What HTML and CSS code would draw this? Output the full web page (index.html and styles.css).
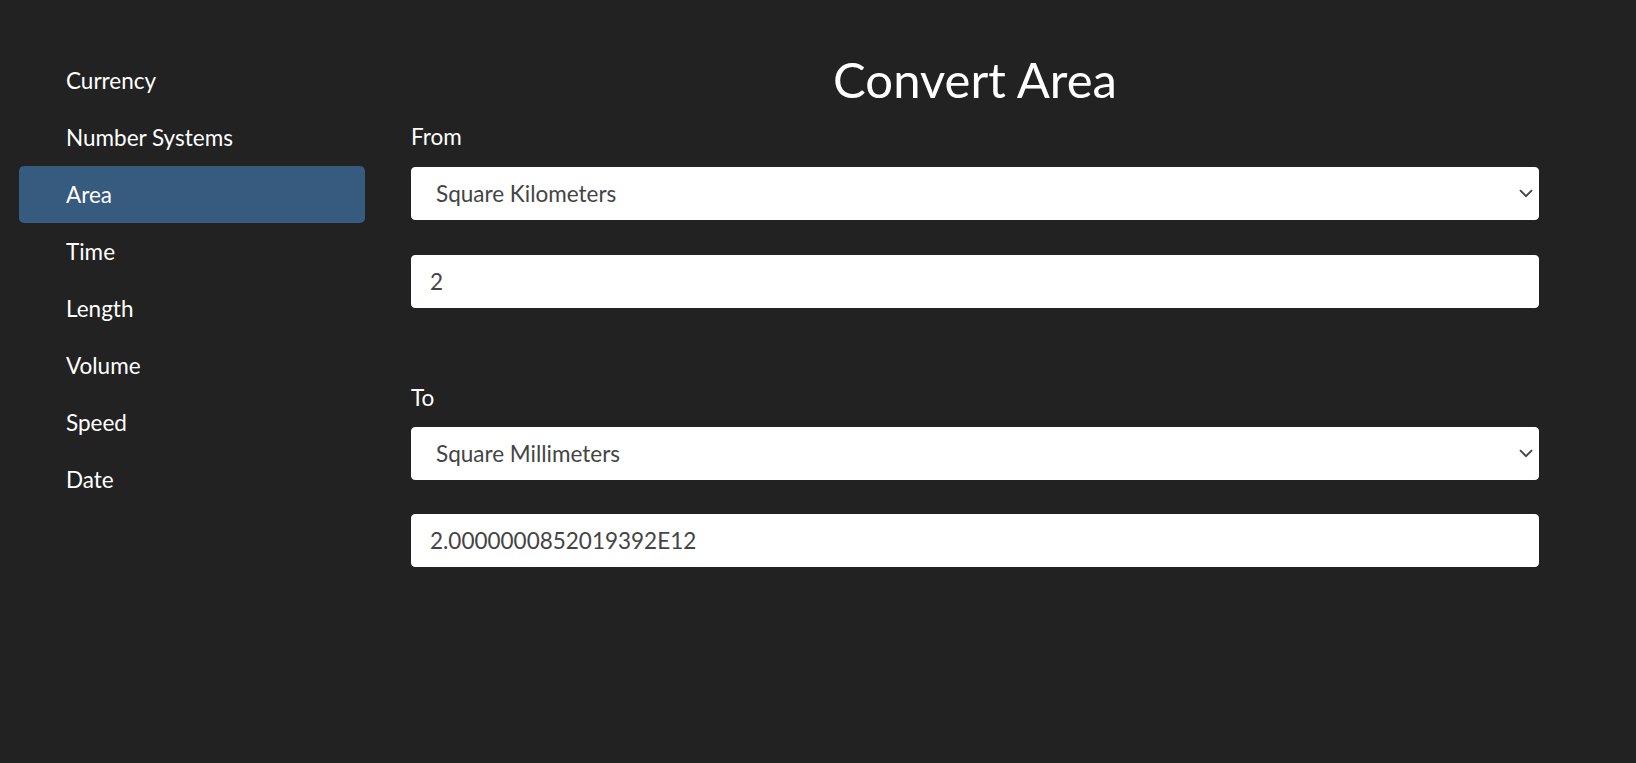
FILE: index.html
```html
<!DOCTYPE html>
<html lang="en">
<head>
<meta charset="utf-8">
<title>Convert Area</title>
<link rel="stylesheet" href="styles.css">
</head>
<body>
<div class="layout">
  <nav class="sidebar">
    <a class="nav-link" href="#">Currency</a>
    <a class="nav-link" href="#">Number Systems</a>
    <a class="nav-link active" href="#">Area</a>
    <a class="nav-link" href="#">Time</a>
    <a class="nav-link" href="#">Length</a>
    <a class="nav-link" href="#">Volume</a>
    <a class="nav-link" href="#">Speed</a>
    <a class="nav-link" href="#">Date</a>
  </nav>
  <main class="main">
    <h1 class="title">Convert Area</h1>
    <section class="group">
      <label class="label" for="from-unit">From</label>
      <div class="select-wrap">
        <select id="from-unit" class="field select">
          <option>Square Kilometers</option>
          <option>Square Meters</option>
          <option>Square Millimeters</option>
        </select>
        <svg class="chevron" width="14" height="9" viewBox="0 0 14 9" aria-hidden="true"><path d="M1 1.2 L7 7.2 L13 1.2" fill="none" stroke="#444" stroke-width="1.9"/></svg>
      </div>
      <input class="field input" type="text" value="2">
    </section>
    <section class="group group-to">
      <label class="label" for="to-unit">To</label>
      <div class="select-wrap">
        <select id="to-unit" class="field select">
          <option>Square Millimeters</option>
          <option>Square Meters</option>
          <option>Square Kilometers</option>
        </select>
        <svg class="chevron" width="14" height="9" viewBox="0 0 14 9" aria-hidden="true"><path d="M1 1.2 L7 7.2 L13 1.2" fill="none" stroke="#444" stroke-width="1.9"/></svg>
      </div>
      <input class="field input" type="text" value="2.0000000852019392E12">
    </section>
  </main>
</div>
</body>
</html>
```

FILE: styles.css
```css
* {
  box-sizing: border-box;
}

html, body {
  margin: 0;
  padding: 0;
  background: #222222;
  color: #ffffff;
  font-family: Lato, "Open Sans", "Liberation Sans", sans-serif;
}

body {
  min-height: 763px;
}

.layout {
  display: flex;
  align-items: flex-start;
  padding: 52px 0 0 19px;
}

.sidebar {
  width: 346px;
  display: flex;
  flex-direction: column;
}

.nav-link {
  display: block;
  height: 57px;
  padding: 16px 16px 16px 47px;
  font-size: 22.5px;
  line-height: 25px;
  color: #ffffff;
  text-decoration: none;
  border-radius: 5px;
}

.nav-link.active {
  background: #375a7f;
}

.main {
  margin-left: 46px;
  width: 1128px;
  display: flex;
  flex-direction: column;
}

.title {
  margin: 0 0 14px;
  font-size: 49px;
  font-weight: 400;
  line-height: 55px;
  text-align: center;
  color: #ffffff;
}

.group {
  display: flex;
  flex-direction: column;
}

.group-to {
  margin-top: 73px;
}

.label {
  display: block;
  font-size: 22.5px;
  line-height: 31px;
  margin-bottom: 15px;
  color: #ffffff;
}

.group-to .label {
  padding-top: 1px;
  margin-bottom: 14px;
}

.select-wrap {
  position: relative;
}

.field {
  display: block;
  width: 100%;
  height: 53px;
  border: 1px solid #ffffff;
  border-radius: 4px;
  background: #ffffff;
  color: #444444;
  font-family: Lato, "Open Sans", "Liberation Sans", sans-serif;
  font-size: 22.5px;
  outline: none;
  margin: 0;
}

.select {
  -webkit-appearance: none;
  appearance: none;
  padding: 0 40px 0 24px;
}

.input {
  margin-top: 35px;
  padding: 0 18px;
}

.group-to .input {
  margin-top: 34px;
}

.chevron {
  position: absolute;
  right: 6px;
  top: 22px;
  pointer-events: none;
}
```
